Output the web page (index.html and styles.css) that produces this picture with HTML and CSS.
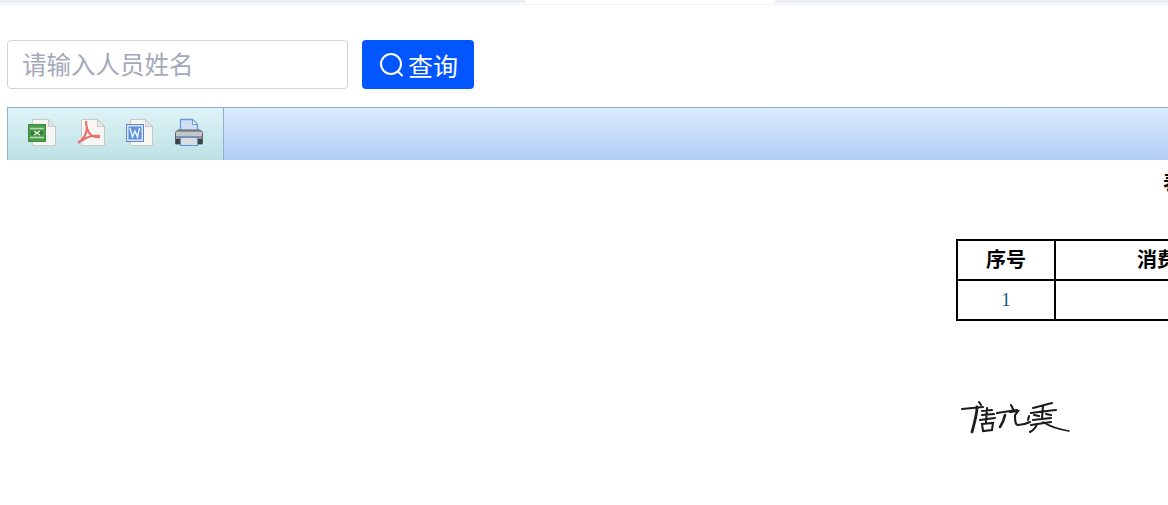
FILE: index.html
```html
<!DOCTYPE html>
<html lang="zh-CN">
<head>
    <meta charset="UTF-8">
    <meta name="viewport" content="width=device-width, initial-scale=1.0">
    <title>消费查询</title>
    <link rel="stylesheet" href="styles.css">
</head>
<body>
    <div class="tabs-strip">
        <div class="tab-active"></div>
    </div>

    <div class="search-bar">
        <input class="search-input" type="text" placeholder="请输入人员姓名">
        <button class="search-btn" type="button">
            <svg class="search-icon" viewBox="0 0 26 26" width="26" height="26">
                <circle cx="12" cy="12" r="10" fill="none" stroke="#fff" stroke-width="2"/>
                <path d="M19 19.5l4 4" fill="none" stroke="#fff" stroke-width="2" stroke-linecap="round"/>
            </svg>
            <span>查询</span>
        </button>
    </div>

    <div class="toolbar">
        <div class="toolbar-btns">
            <!-- excel -->
            <svg class="tool-icon" viewBox="0 0 32 32" width="32" height="32">
                <path d="M7.500 2.500h16l7 7v19h-23z" fill="#f6f6f3" stroke="#c8c8c8"/>
                <path d="M23.500 2.500v7h7z" fill="#e4e4e4" stroke="#c8c8c8"/>
                <rect x="3.500" y="7.500" width="17" height="17" fill="#4c9a4c" stroke="#3f8f42"/>
                <path d="M5 11.500h14M5 20.500h14" stroke="#b9dbb0" stroke-width="1.300"/>
                <path d="M6 14h4v4H6zM14 14h4v4h-4z" fill="#2f7d35"/>
                <path d="M9 14l6 4M15 14l-6 4" stroke="#d8eed2" stroke-width="1.500"/>
            </svg>
            <!-- pdf -->
            <svg class="tool-icon" viewBox="0 0 32 32" width="32" height="32">
                <path d="M7.500 2.500h16l7 7v19h-23z" fill="#f6f6f3" stroke="#c8c8c8"/>
                <path d="M23.500 2.500v7h7z" fill="#e6e6e6" stroke="#c8c8c8"/>
                <path d="M12 4c0 6 2 11 5 14s6 2 9 2M13 10c0 6-3 12-9 16M8 24c4-4 10-6 18-5" fill="none" stroke="#e8706e" stroke-width="2.200"/>
            </svg>
            <!-- word -->
            <svg class="tool-icon" viewBox="0 0 32 32" width="32" height="32">
                <path d="M7.500 2.500h15l7 7v19h-22z" fill="#f6f6f3" stroke="#c8c8c8"/>
                <path d="M22.500 2.500v7h7z" fill="#e4e4e4" stroke="#c8c8c8"/>
                <rect x="3.500" y="7.500" width="17" height="17" fill="#dce7f6" stroke="#5f86d0"/>
                <rect x="5.500" y="9.500" width="13" height="13" fill="#5f90da"/>
                <path d="M7 11l2.500 9 2.500-6 2.500 6 2-9" fill="none" stroke="#eaf1fb" stroke-width="1.500"/>
            </svg>
            <!-- print -->
            <svg class="tool-icon" viewBox="0 0 32 32" width="32" height="32">
                <path d="M8.500 2.500h12l5 5v9h-17z" fill="#cfe0f5" stroke="#6a9ad8" stroke-width="1.300"/>
                <path d="M20.500 2.500v5h5z" fill="#eef5fc" stroke="#6a9ad8"/>
                <path d="M7 13h20c2 0 3.500 1.500 3.500 3.500V27h-27V16.500C3.500 14.500 5 13 7 13z" fill="#8d9299" stroke="#5a5f66"/>
                <rect x="4" y="15" width="26" height="4" fill="#c2c5c9"/>
                <rect x="4" y="22" width="26" height="5" fill="#3f444b"/>
                <rect x="8.500" y="20.500" width="17" height="8" fill="#d9dde2" stroke="#5f90d2"/>
            </svg>
        </div>
    </div>

    <div class="report">
        <div class="report-title">表</div>
        <table class="report-table">
            <tr>
                <th class="col-no">序号</th>
                <th class="col-name">消费</th>
            </tr>
            <tr>
                <td class="col-no num">1</td>
                <td class="col-name"></td>
            </tr>
        </table>
        <!-- scanned signature -->
        <svg class="signature" viewBox="0 0 110 36" width="110" height="36">
            <g fill="none" stroke="#1c1c1c" stroke-width="2.100" stroke-linecap="round">
                <path d="M1 9l21-2M18 2l2 3"/>
                <path d="M16 7c0 8-3 17-5 25" stroke-width="2.800"/>
                <path d="M21 11l10-1M21 15l12-1M26 8l-1 14M19 20l15-2M21 24l11-1-1 7-9 1z"/>
                <path d="M36 13l20-3M50 5l2 4M49 12l8-1-2 3"/>
                <path d="M44 15c-1 5-3 9-5 12" stroke-width="2.600"/>
                <path d="M54 15c0 5 0 10 3 10 3 0 8-1 12-3"/>
                <path d="M72 8l19-5M70 13c8-1 16-2 25-3M68 16l-1 4M82 6l-1 12M73 15l5 1M85 14l5 1M72 20l18-2M70 25l20-3"/>
                <path d="M76 24c-1 3-3 6-7 8"/>
                <path d="M82 22c6 4 14 7 26 9" stroke-width="1.600"/>
            </g>
        </svg>
    </div>
</body>
</html>
```

FILE: styles.css
```css
html, body {
    margin: 0;
    padding: 0;
    height: 505px;
    overflow: hidden;
    background: #fff;
    font-family: "Liberation Sans", "Noto Sans CJK SC", sans-serif;
}

.tabs-strip {
    height: 3px;
    background: #eceef5;
    border-bottom: 1px solid #fff;
    box-shadow: 0 1px 0 #f4f4f4;
    display: flex;
}

.tab-active {
    width: 250px;
    margin-left: 525px;
    background: #fff;
}

.search-bar {
    display: flex;
    gap: 14px;
    margin: 36px 0 18px 7px;
}

.search-input {
    box-sizing: border-box;
    width: 341px;
    height: 49px;
    padding: 2px 14px 0 14px;
    border: 1px solid #d0d3da;
    border-radius: 4px;
    outline: none;
    font-family: inherit;
    font-size: 24.500px;
}

.search-input::placeholder {
    color: #a3aab9;
    opacity: 1;
}

.search-btn {
    box-sizing: border-box;
    display: flex;
    align-items: center;
    gap: 3px;
    width: 112px;
    height: 49px;
    padding: 0 0 0 17px;
    border: none;
    border-radius: 4px;
    background: #0256ff;
    color: #fff;
    font-family: inherit;
    font-size: 25px;
}

.toolbar {
    box-sizing: border-box;
    margin-left: 7px;
    height: 53px;
    border-top: 1px solid #8fb0d6;
    background: linear-gradient(to bottom, #dcecfe, #b0cdf4);
}

.toolbar-btns {
    box-sizing: border-box;
    display: flex;
    align-items: center;
    gap: 17px;
    width: 217px;
    height: 52px;
    padding: 0 0 2px 17px;
    border-left: 1px solid #8fb0d6;
    border-right: 1px solid #8fb0d6;
    background: linear-gradient(to bottom, #dff3f8, #bde2e4);
}

.tool-icon {
    flex: none;
    filter: blur(0.6px);
}

.report {
    margin-left: 956px;
    width: 420px;
    font-family: "Liberation Serif", "Noto Sans CJK SC", serif;
    color: #000;
}

.report-title {
    height: 79px;
    padding: 10px 0 0 207px;
    box-sizing: border-box;
    font-size: 20px;
    font-weight: bold;
    line-height: 26px;
}

.report-table {
    border-collapse: collapse;
    table-layout: fixed;
    width: 400px;
}

.report-table th,
.report-table td {
    border: 2px solid #000;
    height: 38px;
    padding: 0;
    text-align: center;
    font-size: 20px;
    line-height: 24px;
}

.report-table .col-no {
    width: 96px;
}

.report-table .col-name {
    width: 302px;
    padding-right: 98px;
    box-sizing: border-box;
}

.report-table .num {
    color: #0b4f86;
    font-size: 18px;
}

.signature {
    display: block;
    margin: 79px 0 0 5px;
    filter: blur(0.5px);
}
```
